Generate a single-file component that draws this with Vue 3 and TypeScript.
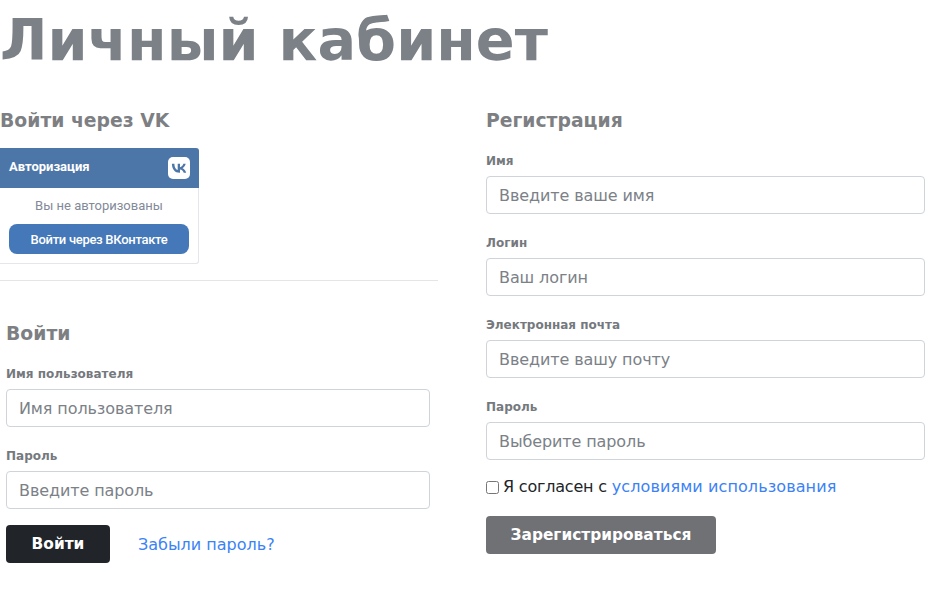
<template>
  <div class="page">
    <h1 class="title">Личный кабинет</h1>
    <div class="columns">
      <div class="col-left">
        <h2 class="head">Войти через VK</h2>
        <div class="vk-widget">
          <div class="vk-top">
            <span class="vk-title">Авторизация</span>
            <span class="vk-logo">
              <svg viewBox="0 0 22 22" width="22" height="22" aria-hidden="true">
                <rect width="22" height="22" rx="5" fill="#fff" />
                <path d="M11.7 15.8C6.8 15.8 4 12.4 3.900 6.800h2.500c.1 4.100 1.900 5.800 3.300 6.200V6.800h2.300v3.500c1.400-.2 2.900-1.800 3.400-3.500h2.300c-.4 2.200-2 3.800-3.200 4.500 1.200.6 3 2 3.700 4.500h-2.500c-.5-1.700-1.900-3-3.700-3.200v3.200h-.3z" fill="#4d76a8" />
              </svg>
            </span>
          </div>
          <div class="vk-body">
            <div class="vk-note">Вы не авторизованы</div>
            <button class="vk-btn" type="button">Войти через ВКонтакте</button>
          </div>
        </div>
        <hr class="rule" />
        <form class="login" @submit.prevent>
          <h2 class="head login-head">Войти</h2>
          <div class="fields">
            <div v-for="f in loginFields" :key="f.label" class="field">
              <label class="lbl">{{ f.label }}</label>
              <input class="inp" :type="f.type" :placeholder="f.placeholder" />
            </div>
          </div>
          <div class="login-actions">
            <button class="btn btn-dark" type="submit">Войти</button>
            <a class="link" href="#">Забыли пароль?</a>
          </div>
        </form>
      </div>
      <form class="col-right" @submit.prevent>
        <h2 class="head">Регистрация</h2>
        <div class="fields reg-fields">
          <div v-for="f in regFields" :key="f.label" class="field">
            <label class="lbl">{{ f.label }}</label>
            <input class="inp" :type="f.type" :placeholder="f.placeholder" />
          </div>
        </div>
        <label class="agree">
          <input class="check" type="checkbox" />
          <span>Я согласен с <a class="link link-terms" href="#">условиями использования</a></span>
        </label>
        <button class="btn btn-gray" type="submit">Зарегистрироваться</button>
      </form>
    </div>
  </div>
</template>

<script setup lang="ts">
interface Field {
  label: string
  placeholder: string
  type: string
}

const loginFields: Field[] = [
  { label: 'Имя пользователя', placeholder: 'Имя пользователя', type: 'text' },
  { label: 'Пароль', placeholder: 'Введите пароль', type: 'password' }
]

const regFields: Field[] = [
  { label: 'Имя', placeholder: 'Введите ваше имя', type: 'text' },
  { label: 'Логин', placeholder: 'Ваш логин', type: 'text' },
  { label: 'Электронная почта', placeholder: 'Введите вашу почту', type: 'email' },
  { label: 'Пароль', placeholder: 'Выберите пароль', type: 'password' }
]
</script>

<style scoped>
.page {
  font-family: "DejaVu Sans", sans-serif;
  color: #212529;
  width: 931px;
  height: 614px;
  overflow: hidden;
}

.title {
  margin: 0;
  padding-top: 1px;
  font-size: 57.3px;
  line-height: 80px;
  font-weight: 700;
  color: #7b8187;
}

.columns {
  display: grid;
  grid-template-columns: 438px 439px;
  column-gap: 48px;
  margin-top: 26px;
}

.head {
  margin: 0;
  font-size: 18.8px;
  line-height: 28px;
  font-weight: 700;
  color: #7d7f83;
}

.vk-widget {
  width: 199px;
  margin-top: 13px;
  background: #fff;
  border: 1px solid #e3e6ea;
  border-top: 0;
  border-left: 0;
  border-radius: 0 3px 3px 0;
  box-sizing: border-box;
  height: 116px;
  font-family: Roboto, sans-serif;
}

.vk-top {
  height: 40px;
  background: #4d76a8;
  display: flex;
  align-items: center;
  justify-content: space-between;
  padding: 0 9px;
  margin-right: -1px;
  border-radius: 0 3px 0 0;
}

.vk-title {
  font-size: 13px;
  font-weight: 700;
  color: #fff;
  margin-bottom: 3px;
}

.vk-logo {
  display: flex;
}

.vk-body {
  padding: 10px 9px 0;
  text-align: center;
}

.vk-note {
  font-size: 13px;
  line-height: 16px;
  color: #828a99;
}

.vk-btn {
  display: block;
  width: 180px;
  height: 30px;
  margin-top: 10px;
  border: 0;
  border-radius: 8px;
  background: #4478b8;
  color: #fff;
  font-family: Roboto, sans-serif;
  font-size: 13px;
  font-weight: 500;
  letter-spacing: -0.3px;
  padding: 0;
}

.rule {
  margin: 16px 0 0;
  border: 0;
  border-top: 1px solid #e5e5e5;
}

.login {
  padding: 39px 8px 0 6px;
}

.login-head {
  margin-bottom: 16px;
}

.fields {
  display: flex;
  flex-direction: column;
  gap: 19px;
}

.reg-fields {
  margin-top: 16px;
}

.lbl {
  display: block;
  font-size: 12px;
  line-height: 20px;
  font-weight: 700;
  color: #75797e;
  margin-bottom: 5px;
}

.inp {
  display: block;
  width: 100%;
  height: 38px;
  box-sizing: border-box;
  padding: 0 12px;
  border: 1px solid #ced4da;
  border-radius: 4px;
  background: #fff;
  font-family: "DejaVu Sans", sans-serif;
  font-size: 16px;
  letter-spacing: -0.1px;
  color: #495057;
  outline: none;
}

.inp::placeholder {
  color: #7b8187;
  opacity: 1;
}

.login-actions {
  display: flex;
  align-items: center;
  gap: 28px;
  margin-top: 16px;
}

.btn {
  height: 38px;
  border: 0;
  border-radius: 4px;
  color: #fff;
  font-family: "DejaVu Sans", sans-serif;
  font-size: 15.4px;
  font-weight: 700;
  padding: 0;
}

.btn-dark {
  width: 104px;
  background: #212529;
}

.btn-gray {
  display: block;
  width: 230px;
  background: #6f7175;
  margin-top: 17px;
}

.link {
  color: #3b82f6;
  text-decoration: none;
  font-size: 16px;
}

.link-terms {
  letter-spacing: 0.1px;
}

.agree {
  display: flex;
  align-items: center;
  margin-top: 15px;
  font-size: 16px;
  letter-spacing: -0.2px;
  line-height: 24px;
  color: #212529;
}

.check {
  width: 13px;
  height: 13px;
  margin: 0 4px 0 0;
}
</style>

<style>
html, body {
  margin: 0;
  background: #fff;
}
</style>
